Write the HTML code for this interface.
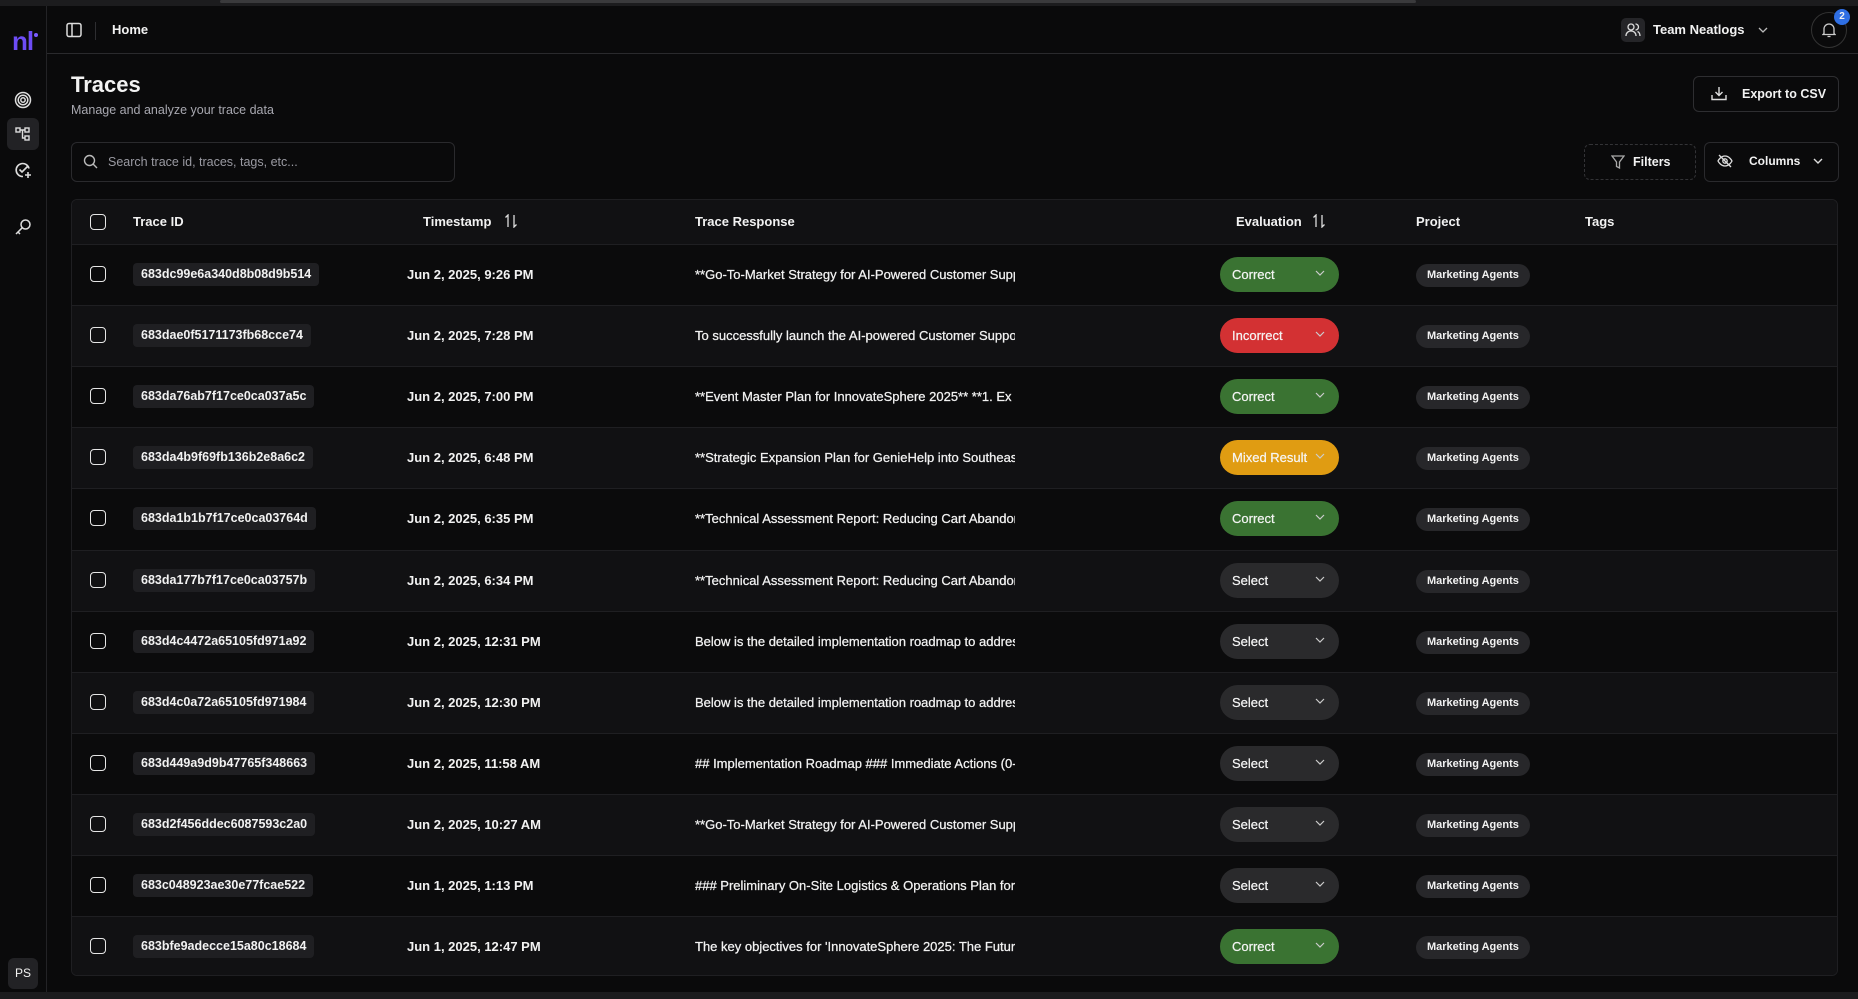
<!DOCTYPE html>
<html><head><meta charset="utf-8"><style>
*{box-sizing:border-box;margin:0;padding:0}
body{width:1858px;height:999px;background:#0a0a0b;color:#f2f2f2;font-family:"Liberation Sans",sans-serif;position:relative;overflow:hidden}
.abs{position:absolute}
.top{left:0;top:0;width:1858px;height:6px;background:#1c1c1e}
.top i{position:absolute;left:220px;top:0;width:1196px;height:3px;background:#3a3a3c;border-radius:2px}
.side{left:0;top:6px;width:47px;height:986px;border-right:1px solid #232326;background:#0a0a0b}
.hdr{left:47px;top:6px;width:1811px;height:48px;border-bottom:1px solid #2a2a2d}
.bottom{left:0;top:992px;width:1858px;height:7px;background:#1c1c1e}
.tbl{left:71px;top:199px;width:1767px;height:777px;border:1px solid #1f1f22;border-radius:6px;overflow:hidden;background:#0b0b0c}
.row{position:absolute;left:0;width:100%;height:61px;border-top:1px solid #1f1f22;font-size:13px;font-weight:bold}
.row.alt{background:#111113}
.th{position:absolute;left:0;top:0;width:100%;height:44px;background:#111113;font-size:13px;font-weight:bold}
.cb{position:absolute;left:18px;width:16px;height:16px;border:1.5px solid #e6e6e6;border-radius:4px}
.id{position:absolute;left:61px;top:18px;height:23px;line-height:23px;padding:0 8px;background:#1f1f22;border-radius:4px;font-size:12.5px}
.ts{position:absolute;left:335px;top:0;line-height:60px}
.rs{position:absolute;left:623px;top:0;line-height:60px;width:320px;overflow:hidden;white-space:nowrap;font-weight:normal;-webkit-text-stroke:.25px #f2f2f2}
.pill{position:absolute;left:1148px;top:12px;width:119px;height:35px;border-radius:18px;line-height:35px;padding-left:12px;font-weight:normal;font-size:13px;-webkit-text-stroke:.2px #fff}
.pill svg{position:absolute;right:14px;top:13px}
.tag{position:absolute;left:1344px;top:19px;height:23px;line-height:23px;padding:0 11px;background:#27272a;border-radius:12px;font-size:11px}
</style></head><body>
<div class="abs top"><i></i></div>
<div class="abs side">
 <div class="abs" style="left:12px;top:22px;font-size:26px;font-weight:bold;color:#6d4cf5;letter-spacing:-1px;line-height:26px">nl</div>
 <div class="abs" style="left:34px;top:27px;width:4px;height:4px;border-radius:2px;background:#7b5cff"></div>
 <svg class="abs" style="left:14px;top:85px" width="18" height="18" viewBox="0 0 18 18" fill="none" stroke="#ddd" stroke-width="1.5"><circle cx="9" cy="9" r="7.5"/><circle cx="9" cy="9" r="4.8"/><circle cx="9" cy="9" r="2.2"/></svg>
 <div class="abs" style="left:7px;top:112px;width:32px;height:32px;border-radius:6px;background:#222225"></div>
 <svg class="abs" style="left:15px;top:120px" width="16" height="16" viewBox="0 0 16 16" fill="none" stroke="#ddd" stroke-width="1.4"><rect x="1" y="2" width="4" height="4"/><rect x="10" y="2" width="4" height="4"/><rect x="10" y="10" width="4" height="4"/><path d="M5 4h5M7.5 4v8h2.5"/></svg>
 <svg class="abs" style="left:14px;top:155px" width="18" height="18" viewBox="0 0 18 18" fill="none" stroke="#ddd" stroke-width="1.6"><path d="M15 7.5A6.5 6.5 0 1 0 9 15.5"/><path d="M5.5 8.5l2.5 2.5 6-6"/><path d="M14 11v6M11 14h6"/></svg>
 <svg class="abs" style="left:14px;top:212px" width="18" height="18" viewBox="0 0 18 18" fill="none" stroke="#ddd" stroke-width="1.5"><circle cx="11.5" cy="6.5" r="4.5"/><path d="M8.3 9.7L2 16M4 14l2 2"/></svg>
 <div class="abs" style="left:8px;top:952px;width:30px;height:31px;border-radius:6px;background:#222225;font-size:12px;line-height:31px;text-align:center">PS</div>
</div>
<div class="abs hdr">
 <svg class="abs" style="left:19px;top:16px" width="16" height="16" viewBox="0 0 16 16" fill="none" stroke="#ddd" stroke-width="1.5"><rect x="1" y="1.5" width="14" height="13" rx="2"/><path d="M6 1.5v13"/></svg>
 <div class="abs" style="left:48px;top:16px;width:1px;height:18px;background:#2e2e31"></div>
 <div class="abs" style="left:65px;top:16px;font-size:13px;font-weight:bold">Home</div>
 <div class="abs" style="left:1574px;top:12px;width:24px;height:24px;border-radius:5px;background:#252528"></div>
 <svg class="abs" style="left:1578px;top:16px" width="16" height="16" viewBox="0 0 16 16" fill="none" stroke="#ddd" stroke-width="1.3"><circle cx="6" cy="5" r="3"/><path d="M1 14c0-3 2-5 5-5s5 2 5 5M10.5 2a3 3 0 0 1 0 6M12.5 9.5c1.5.6 2.5 2.2 2.5 4.5"/></svg>
 <div class="abs" style="left:1606px;top:16px;font-size:13px;font-weight:bold">Team Neatlogs</div>
 <svg class="abs" style="left:1711px;top:21px" width="10" height="6" viewBox="0 0 10 6" fill="none" stroke="#bbb" stroke-width="1.3"><path d="M1 1l4 4 4-4"/></svg>
 <div class="abs" style="left:1764px;top:6px;width:36px;height:36px;border-radius:18px;border:1px solid #333"></div>
 <svg class="abs" style="left:1775px;top:16px" width="14" height="16" viewBox="0 0 14 16" fill="none" stroke="#ccc" stroke-width="1.3"><path d="M2 11.5V7a5 5 0 0 1 10 0v4.5l1 1H1zM5.5 14.5h3"/></svg>
 <div class="abs" style="left:1787px;top:3px;width:16px;height:16px;border-radius:8px;background:#2f6fe4;font-size:10px;font-weight:bold;text-align:center;line-height:16px">2</div>
</div>
<div class="abs" style="left:71px;top:72px;font-size:22px;font-weight:bold">Traces</div>
<div class="abs" style="left:71px;top:103px;font-size:12.5px;color:#a8a8b0">Manage and analyze your trace data</div>
<div class="abs" style="left:1693px;top:76px;width:146px;height:36px;border:1px solid #2e2e31;border-radius:6px"></div>
<svg class="abs" style="left:1711px;top:86px" width="16" height="15" viewBox="0 0 16 15" fill="none" stroke="#ddd" stroke-width="1.4"><path d="M8 1v8M4.5 6L8 9.5 11.5 6M1 9v4.5h14V9"/></svg>
<div class="abs" style="left:1742px;top:87px;font-size:12.5px;font-weight:bold">Export to CSV</div>
<div class="abs" style="left:71px;top:142px;width:384px;height:40px;border:1px solid #2a2a2d;border-radius:6px"></div>
<svg class="abs" style="left:83px;top:154px" width="15" height="15" viewBox="0 0 15 15" fill="none" stroke="#bbb" stroke-width="1.4"><circle cx="6.5" cy="6.5" r="5"/><path d="M10.3 10.3L14 14"/></svg>
<div class="abs" style="left:108px;top:155px;font-size:12.5px;color:#9a9aa2">Search trace id, traces, tags, etc...</div>
<div class="abs" style="left:1584px;top:144px;width:112px;height:36px;border:1px dashed #333336;border-radius:6px"></div>
<svg class="abs" style="left:1611px;top:155px" width="14" height="14" viewBox="0 0 14 14" fill="none" stroke="#aaa" stroke-width="1.3"><path d="M1 1h12L8.5 7v6L5.5 11.5V7z"/></svg>
<div class="abs" style="left:1633px;top:155px;font-size:12.5px;font-weight:bold">Filters</div>
<div class="abs" style="left:1704px;top:142px;width:135px;height:40px;border:1px solid #2a2a2d;border-radius:6px"></div>
<svg class="abs" style="left:1717px;top:153px" width="16" height="16" viewBox="0 0 16 16" fill="none" stroke="#ddd" stroke-width="1.3"><path d="M1 8s2.5-5 7-5 7 5 7 5-2.5 5-7 5-7-5-7-5z"/><circle cx="8" cy="8" r="2.2"/><path d="M2 2l12 12"/></svg>
<div class="abs" style="left:1749px;top:154px;font-size:12px;font-weight:bold">Columns</div>
<svg class="abs" style="left:1813px;top:158px" width="10" height="6" viewBox="0 0 10 6" fill="none" stroke="#ddd" stroke-width="1.4"><path d="M1 1l4 4 4-4"/></svg>

<div class="abs tbl">
 <div class="th">
  <div class="cb" style="top:14px"></div>
  <div class="abs" style="left:61px;top:14px">Trace ID</div>
  <div class="abs" style="left:351px;top:14px">Timestamp</div>
  <svg class="abs" style="left:432px;top:14px" width="14" height="14" viewBox="0 0 14 14" fill="none" stroke="#ddd" stroke-width="1.3"><path d="M4 13V1L1.5 3.5M10 1v12l2.5-2.5"/></svg>
  <div class="abs" style="left:623px;top:14px">Trace Response</div>
  <div class="abs" style="left:1164px;top:14px">Evaluation</div>
  <svg class="abs" style="left:1240px;top:14px" width="14" height="14" viewBox="0 0 14 14" fill="none" stroke="#ddd" stroke-width="1.3"><path d="M4 13V1L1.5 3.5M10 1v12l2.5-2.5"/></svg>
  <div class="abs" style="left:1344px;top:14px">Project</div>
  <div class="abs" style="left:1513px;top:14px">Tags</div>
 </div>
 <div id="rows"></div>
</div>
<script>
var d=[["683dc99e6a340d8b08d9b514","Jun 2, 2025, 9:26 PM","**Go-To-Market Strategy for AI-Powered Customer Support","Correct"],
["683dae0f5171173fb68cce74","Jun 2, 2025, 7:28 PM","To successfully launch the AI-powered Customer Support","Incorrect"],
["683da76ab7f17ce0ca037a5c","Jun 2, 2025, 7:00 PM","**Event Master Plan for InnovateSphere 2025** **1. Ex","Correct"],
["683da4b9f69fb136b2e8a6c2","Jun 2, 2025, 6:48 PM","**Strategic Expansion Plan for GenieHelp into Southeast","Mixed Result"],
["683da1b1b7f17ce0ca03764d","Jun 2, 2025, 6:35 PM","**Technical Assessment Report: Reducing Cart Abandon","Correct"],
["683da177b7f17ce0ca03757b","Jun 2, 2025, 6:34 PM","**Technical Assessment Report: Reducing Cart Abandon","Select"],
["683d4c4472a65105fd971a92","Jun 2, 2025, 12:31 PM","Below is the detailed implementation roadmap to address","Select"],
["683d4c0a72a65105fd971984","Jun 2, 2025, 12:30 PM","Below is the detailed implementation roadmap to address","Select"],
["683d449a9d9b47765f348663","Jun 2, 2025, 11:58 AM","## Implementation Roadmap ### Immediate Actions (0-1","Select"],
["683d2f456ddec6087593c2a0","Jun 2, 2025, 10:27 AM","**Go-To-Market Strategy for AI-Powered Customer Support","Select"],
["683c048923ae30e77fcae522","Jun 1, 2025, 1:13 PM","### Preliminary On-Site Logistics & Operations Plan for I","Select"],
["683bfe9adecce15a80c18684","Jun 1, 2025, 12:47 PM","The key objectives for 'InnovateSphere 2025: The Future","Correct"]];
var c={"Correct":"#3a7332","Incorrect":"#d33133","Mixed Result":"#e09c12","Select":"#2a2a2c"};
var h="";d.forEach(function(r,i){h+='<div class="row'+(i%2?' alt':'')+'" style="top:'+(44+i*61.1)+'px"><div class="cb" style="top:21px"></div><div class="id">'+r[0]+'</div><div class="ts">'+r[1]+'</div><div class="rs">'+r[2]+'</div><div class="pill" style="background:'+c[r[3]]+'">'+r[3]+'<svg width="10" height="6" viewBox="0 0 10 6" fill="none" stroke="#ccc" stroke-width="1.2"><path d="M1 1l4 4 4-4"/></svg></div><div class="tag">Marketing Agents</div></div>';});
document.getElementById("rows").innerHTML=h;
</script>
<div class="abs bottom"></div>
</body></html>
